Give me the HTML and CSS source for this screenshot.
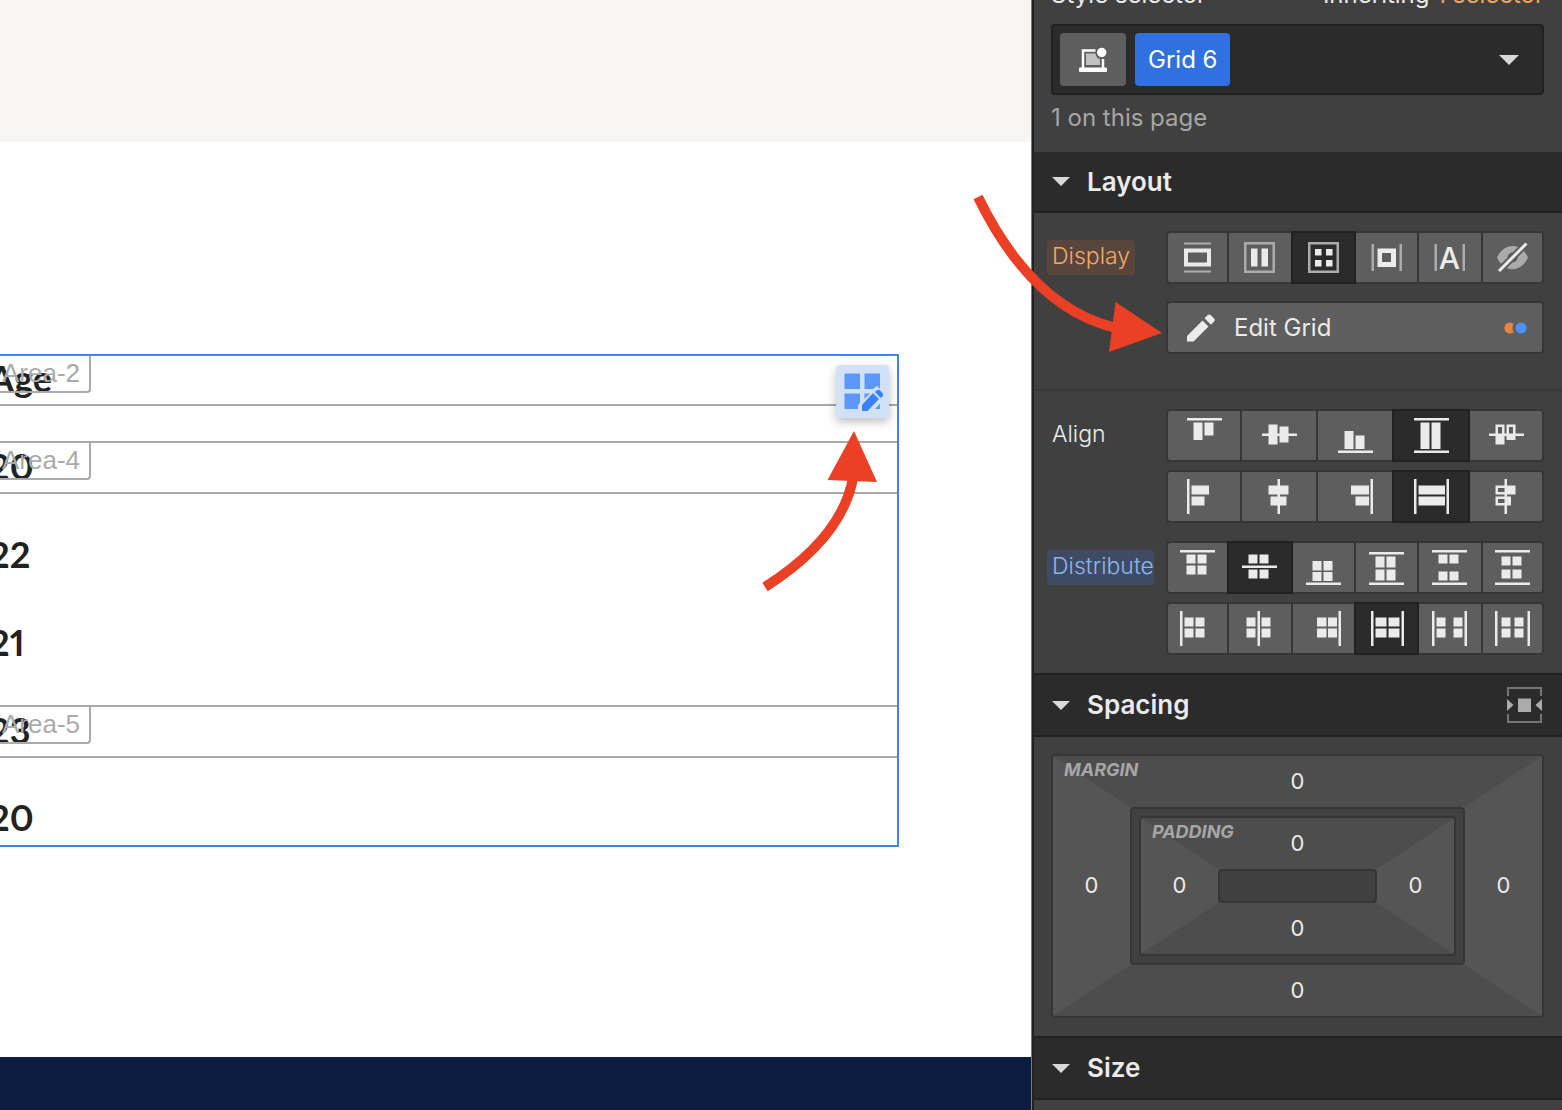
FILE: index.html
```html
<!DOCTYPE html>
<html lang="en">
<head>
  <meta charset="UTF-8" />
  <meta name="viewport" content="width=device-width, initial-scale=1" />
  <title>Designer - Grid 6</title>
  <link rel="stylesheet" href="styles.css">
</head>
<body>
  <!-- Icon sprite -->
  <svg class="sprite" aria-hidden="true">
    <!-- Align -->
    <symbol id="align-start" viewBox="0 0 35 35">
      <path d="M0 0h35v2.5H0zM6.5 4.5h9V22h-9zM17.5 4.5h9v13h-9z"/>
    </symbol>
    <symbol id="align-center" viewBox="0 0 35 35">
      <path d="M0 15.5h35V18H0zM6.5 6.5h9v20h-9zM17.5 8.5h9v16h-9z"/>
    </symbol>
    <symbol id="align-end" viewBox="0 0 35 35">
      <path d="M0 32.5h35V35H0zM6.5 13h9v18h-9zM17.5 17.5h9V31h-9z"/>
    </symbol>
    <symbol id="align-stretch" viewBox="0 0 35 35">
      <path d="M0 0h35v2.5H0zM0 32.5h35V35H0zM6.5 4.5h9V31h-9zM17.5 4.5h9V31h-9z"/>
    </symbol>
    <symbol id="align-baseline" viewBox="0 0 35 35">
      <path fill-rule="evenodd" d="M0 15.5h6.5v-9h9v9h2v-9h9v9H35V18h-8.5v4h-9v-4h-2v8.5h-9V18H0zM9 9v6.5h4V9zM20 9v6.5h4V9z"/>
    </symbol>
    <!-- Distribute -->
    <symbol id="dist-start" viewBox="0 0 35 35">
      <path d="M0 0h35v2.5H0zM6.5 4.5h9v9h-9zM17.5 4.5h9v9h-9zM6.5 15.5h9v9h-9zM17.5 15.5h9v9h-9z"/>
    </symbol>
    <symbol id="dist-center" viewBox="0 0 35 35">
      <path d="M0 15.5h35V18H0zM6.5 4.5h9v9h-9zM17.5 4.5h9v9h-9zM6.5 19.5h9v9h-9zM17.5 19.5h9v9h-9z"/>
    </symbol>
    <symbol id="dist-end" viewBox="0 0 35 35">
      <path d="M0 32.5h35V35H0zM6.5 11h9v9.500h-9zM17.5 11h9v9.5h-9zM6.5 22h9v9h-9zM17.5 22h9v9h-9z"/>
    </symbol>
    <symbol id="dist-stretch" viewBox="0 0 35 35">
      <path d="M0 2h35v2.5H0zM0 32.5h35V35H0zM6.5 6.5h9v11h-9zM17.5 6.5h9v11h-9zM6.5 19.5h9v11h-9zM17.5 19.5h9v11h-9z"/>
    </symbol>
    <symbol id="dist-between" viewBox="0 0 35 35">
      <path d="M0 0h35v2.5H0zM0 32.5h35V35H0zM6.5 4.5h9v9h-9zM17.5 4.5h9v9h-9zM6.5 21.5h9v9h-9zM17.5 21.5h9v9h-9z"/>
    </symbol>
    <symbol id="dist-around" viewBox="0 0 35 35">
      <path d="M0 0h35v2.5H0zM0 32.5h35V35H0zM6.5 6.5h9v9h-9zM17.5 6.5h9v9h-9zM6.5 19.5h9v9h-9zM17.5 19.5h9v9h-9z"/>
    </symbol>
  </svg>

  <!-- Page canvas -->
  <main class="canvas">
    <div class="hero-band"></div>
    <section class="page-body">
      <div class="site-grid">
        <div class="cell area">Age<span class="area-tag">Area-2</span></div>
        <div class="cell area">20<span class="area-tag">Area-4</span></div>
        <div class="cell">22</div>
        <div class="cell">21</div>
        <div class="cell area">23<span class="area-tag">Area-5</span></div>
        <div class="cell">20</div>
        <button class="grid-edit" aria-label="Edit grid">
          <svg width="53" height="53" viewBox="0 0 53 53">
            <path fill="#5c98fa" d="M8.5 8.5H24V24H8.5zM28.5 8.5H44V24H28.5zM8.500 28.500H24V38l-2 2v4H8.500zM28.500 28.500h5.500L28.500 34zM44 38.500V44h-5z"/>
            <path d="M35 25.500l6-4.500 9.500 9-7 7z" fill="#d2e1f8"/>
            <path fill="#3b82f6" d="M26 40l11-12 6 6-11.500 12H26zM39 27l1.500-1.500q2-1.500 4 .5l2 2q1.500 2 0 3.500L44.500 33z"/>
          </svg>
        </button>
      </div>
    </section>
    <footer class="site-footer"></footer>
  </main>

  <!-- Style panel -->
  <aside class="panel">
    <section class="selector">
      <div class="selector-top">
        <span>Style selector</span>
        <span>Inheriting <a href="#" class="inherit-link">1 selector</a></span>
      </div>
      <div class="selector-box">
        <button class="state-btn" aria-label="Breakpoint">
          <svg width="28" height="26" viewBox="0 0 28 26">
            <path d="M4 21V3.500h12.500M24 12v9" fill="none" stroke="#fff" stroke-width="2.500"/>
            <path d="M7 6.500h9.500q1 5 4.500 5.500V18H7z" fill="#c2c2c2"/>
            <rect y="20.500" width="28" height="4.500" rx="1" fill="#fff"/>
            <circle cx="22.700" cy="5.500" r="4.700" fill="#fff"/>
          </svg>
        </button>
        <button class="class-tag">Grid 6</button>
        <button class="selector-caret" aria-label="Show classes"><span class="caret caret-big"></span></button>
      </div>
      <div class="selector-count">1 on this page</div>
    </section>

    <header class="panel-header panel-header-first">
      <span class="caret"></span>
      <h2>Layout</h2>
    </header>

    <section class="group">
      <div class="row">
        <div class="label-col"><span class="label label-orange">Display</span></div>
        <div class="stack stack-wide">
          <div class="btn-group">
            <button aria-label="Block">
              <svg class="icon" viewBox="0 0 35 35">
                <path class="dim" d="M4 2.500h27v2H4zM4 30.500h27v2H4z"/>
                <path fill-rule="evenodd" d="M4 8.500h27v18H4zM8 12.500v10h19v-10z"/>
              </svg>
            </button>
            <button aria-label="Flex">
              <svg class="icon" viewBox="0 0 35 35">
                <path class="dim" fill-rule="evenodd" d="M2 2h31v31H2zM4.500 4.500v26h26v-26z"/>
                <path d="M9 8.500h6.500v18H9zM19.500 8.500H26v18h-6.500z"/>
              </svg>
            </button>
            <button class="active" aria-label="Grid">
              <svg class="icon" viewBox="0 0 35 35">
                <path class="dim" fill-rule="evenodd" d="M2 2h31v31H2zM4.500 4.500v26h26v-26z"/>
                <path d="M9 9h6.500v6.500H9zM20 9h6.500v6.500H20zM9 20h6.500v6.500H9zM20 20h6.500v6.500H20z"/>
              </svg>
            </button>
            <button aria-label="Inline block">
              <svg class="icon" viewBox="0 0 35 35">
                <path class="dim" d="M2.500 4H5v27H2.500zM30.500 4H33v27h-2.500z"/>
                <path fill-rule="evenodd" d="M8.500 8.500h18.500v18.500H8.500zM13 13v9h9v-9z"/>
              </svg>
            </button>
            <button aria-label="Inline">
              <svg class="icon" viewBox="0 0 35 35">
                <path class="dim" d="M2.500 4H5v27H2.500zM30.500 4H33v27h-2.500z"/>
                <text class="icon-letter" x="17.500" y="28.500" text-anchor="middle">A</text>
              </svg>
            </button>
            <button aria-label="None">
              <svg class="icon" viewBox="0 0 35 35">
                <path class="dim" fill-rule="evenodd" d="M2 17.500C9 2 26 2 33 17.500C26 33 9 33 2 17.500zM17.500 12.500a5 5 0 1 0 0 10a5 5 0 1 0 0-10z"/>
                <path d="M2 33L33 2" stroke="#5e5e5e" stroke-width="7"/>
                <path d="M4 31L31.500 3.500" stroke="#ebebeb" stroke-width="3"/>
              </svg>
            </button>
          </div>
          <button class="edit-grid">
            <svg width="28" height="28" viewBox="0 0 28 28">
              <path d="M0 22L15.500 6.500l6 6L6.500 27.500H0zM17.500 4.300l3-3q1.700-1.600 3.400 0l3 3q1.700 1.700 0 3.400l-3 3z"/>
            </svg>
            <span>Edit Grid</span>
            <svg class="edit-dots" width="23" height="12" viewBox="0 0 23 12">
              <circle cx="6" cy="6" r="5.600" fill="#e9843f"/>
              <circle cx="17" cy="6" r="8.500" fill="#5e5e5e"/>
              <circle cx="17" cy="6" r="5.600" fill="#4a90f7"/>
            </svg>
          </button>
        </div>
      </div>
    </section>

    <section class="group group-divided">
      <div class="row">
        <div class="label-col"><span class="label">Align</span></div>
        <div class="stack">
          <div class="btn-group">
            <button aria-label="Align items start"><svg class="icon"><use href="#align-start"/></svg></button>
            <button aria-label="Align items center"><svg class="icon"><use href="#align-center"/></svg></button>
            <button aria-label="Align items end"><svg class="icon"><use href="#align-end"/></svg></button>
            <button class="active" aria-label="Align items stretch"><svg class="icon"><use href="#align-stretch"/></svg></button>
            <button aria-label="Align items baseline"><svg class="icon"><use href="#align-baseline"/></svg></button>
          </div>
          <div class="btn-group">
            <button aria-label="Justify items start"><svg class="icon turned"><use href="#align-start"/></svg></button>
            <button aria-label="Justify items center"><svg class="icon turned"><use href="#align-center"/></svg></button>
            <button aria-label="Justify items end"><svg class="icon turned"><use href="#align-end"/></svg></button>
            <button class="active" aria-label="Justify items stretch"><svg class="icon turned"><use href="#align-stretch"/></svg></button>
            <button aria-label="Justify items baseline"><svg class="icon turned"><use href="#align-baseline"/></svg></button>
          </div>
        </div>
      </div>

      <div class="row">
        <div class="label-col"><span class="label label-blue">Distribute</span></div>
        <div class="stack">
          <div class="btn-group">
            <button aria-label="Align content start"><svg class="icon"><use href="#dist-start"/></svg></button>
            <button class="active" aria-label="Align content center"><svg class="icon"><use href="#dist-center"/></svg></button>
            <button aria-label="Align content end"><svg class="icon"><use href="#dist-end"/></svg></button>
            <button aria-label="Align content stretch"><svg class="icon"><use href="#dist-stretch"/></svg></button>
            <button aria-label="Align content space between"><svg class="icon"><use href="#dist-between"/></svg></button>
            <button aria-label="Align content space around"><svg class="icon"><use href="#dist-around"/></svg></button>
          </div>
          <div class="btn-group">
            <button aria-label="Justify content start"><svg class="icon turned"><use href="#dist-start"/></svg></button>
            <button aria-label="Justify content center"><svg class="icon turned"><use href="#dist-center"/></svg></button>
            <button aria-label="Justify content end"><svg class="icon turned"><use href="#dist-end"/></svg></button>
            <button class="active" aria-label="Justify content stretch"><svg class="icon turned"><use href="#dist-stretch"/></svg></button>
            <button aria-label="Justify content space between"><svg class="icon turned"><use href="#dist-between"/></svg></button>
            <button aria-label="Justify content space around"><svg class="icon turned"><use href="#dist-around"/></svg></button>
          </div>
        </div>
      </div>
    </section>

    <header class="panel-header">
      <span class="caret"></span>
      <h2>Spacing</h2>
      <button class="center-btn" aria-label="Center element">
        <svg width="35" height="36" viewBox="0 0 35 36">
          <path d="M1 9V1h33v8M1 27v8h33v-8" fill="none" stroke="#757575" stroke-width="2"/>
          <path d="M0 12l6.500 6L0 24zM35 12l-6.500 6 6.500 6zM11 11.500h13V25H11z" fill="#ababab"/>
        </svg>
      </button>
    </header>

    <section class="spacing">
      <div class="box margin-box">
        <span class="box-name">Margin</span>
        <button class="side side-top">0</button>
        <button class="side">0</button>
        <div class="padding-wrap">
          <div class="box">
            <span class="box-name">Padding</span>
            <button class="side side-top">0</button>
            <button class="side">0</button>
            <div class="box-core"></div>
            <button class="side">0</button>
            <button class="side side-bottom">0</button>
          </div>
        </div>
        <button class="side">0</button>
        <button class="side side-bottom">0</button>
      </div>
    </section>

    <header class="panel-header">
      <span class="caret"></span>
      <h2>Size</h2>
    </header>
  </aside>

  <!-- Callout arrows -->
  <svg class="arrows" width="1170" height="600" viewBox="0 0 1170 600" aria-hidden="true">
    <path class="arrow-line" d="M978 197Q1032 308 1116 328"/>
    <path class="arrow-head" d="M1115.500 302L1162 333L1109 352z"/>
    <path class="arrow-line" d="M765 587Q842 538 853 478"/>
    <path class="arrow-head" d="M854 431L827.500 480L877 482z"/>
  </svg>
</body>
</html>
```
FILE: styles.css
```css
* {
  box-sizing: border-box;
}

body {
  margin: 0;
  display: flex;
  min-height: 100vh;
  position: relative;
  overflow: hidden;
  font-family: Inter, "Liberation Sans", sans-serif;
  font-size: 24px;
  line-height: 30px;
  background-color: #fff;
}

button {
  margin: 0;
  padding: 0;
  border: none;
  background: none;
  font: inherit;
  color: inherit;
  cursor: pointer;
}

svg {
  display: block;
}

.sprite {
  position: absolute;
  width: 0;
  height: 0;
}

/********************************************************
 * Page canvas
 ********************************************************/
.canvas {
  flex: 1;
  min-width: 0;
  display: flex;
  flex-direction: column;
  overflow: hidden;
  border-right: 1px solid #7a7a7a;
}

.hero-band {
  height: 142px;
  background-color: #f7f6f4;
}

.page-body {
  flex: 1;
  padding: 212px 132px 48px 0;
}

.site-footer {
  height: 53px;
  background-color: #0a1c40;
}

.site-grid {
  position: relative;
  display: grid;
  grid-template-rows: 50px repeat(4, 53px) 52px;
  row-gap: 35px;
  margin-left: -13px; /* column starts left of the visible area */
  border: 2px solid #3f83f3;
}

.cell {
  position: relative;
  display: flex;
  align-items: flex-end;
  padding-bottom: 1px;
  border: solid transparent;
  border-width: 2px 0;
  font-family: Lato, sans-serif;
  font-size: 36px;
  font-weight: 700;
  font-variant-numeric: proportional-nums;
  line-height: 49px;
  color: #222;
}
.cell.area {
  border-color: #aaa;
}
.cell:first-child {
  border-top: 0;
}

.area-tag {
  position: absolute;
  top: 0;
  left: 0;
  height: 37px;
  padding: 0 9px 0 13px;
  border: solid #aaa;
  border-width: 0 2px 2px 0;
  border-radius: 0 0 4px 0;
  font-family: "Liberation Sans", sans-serif;
  font-size: 26px;
  font-weight: 400;
  line-height: 34px;
  color: #aaa;
}

.grid-edit {
  position: absolute;
  top: 9px;
  right: 8px;
  width: 53px;
  height: 53px;
  border-radius: 4px;
  background-color: #d2e1f8;
  box-shadow: 0 4px 10px rgba(0, 0, 0, 0.25);
}

/********************************************************
 * Style panel
 ********************************************************/
.panel {
  flex: 0 0 530px;
  overflow: hidden;
  border-left: 2px solid #222;
  background-color: #404040;
  color: #ebebeb;
}

.selector {
  margin-top: -20px; /* panel is scrolled */
  padding: 0 18px 19px 17px;
}

.selector-top {
  display: flex;
  justify-content: space-between;
  margin-bottom: 14px;
}

.inherit-link {
  color: #f2a45f;
  text-decoration: none;
}

.selector-box {
  display: flex;
  gap: 9px;
  height: 71px;
  padding: 7px;
  border: 2px solid #212121;
  border-radius: 4px;
  background-color: #2b2b2b;
}

.state-btn {
  width: 66px;
  display: flex;
  justify-content: center;
  align-items: center;
  border-radius: 4px;
  background-color: #5e5e5e;
}

.class-tag {
  padding: 0 13px;
  border-radius: 4px;
  background-color: #3171df;
  color: #fff;
}

.selector-caret {
  margin-left: auto;
  padding-right: 16px;
}

.selector-count {
  margin-top: 8px;
  color: #a6a6a6;
}

.caret {
  display: block;
  border: solid transparent;
  border-width: 9px 9px 0;
  border-top-color: #d9d9d9;
}
.caret-big {
  border-width: 10px 10px 0;
}

.panel-header {
  display: flex;
  align-items: center;
  gap: 17px;
  height: 64px;
  padding: 0 20px 0 18px;
  border: solid #212121;
  border-width: 2px 0;
  background-color: #2b2b2b;
}
.panel-header h2 {
  margin: 0;
  font-size: 26px;
  font-weight: 600;
}
.panel-header-first {
  height: 61px;
  border-top: 0;
}

.center-btn {
  margin-left: auto;
}

/********************************************************
 * Layout controls
 ********************************************************/
.group {
  display: flex;
  flex-direction: column;
  gap: 18px;
  padding: 18px 18px 35px 17px;
}
.group-divided {
  padding-bottom: 18px;
  border-top: 2px solid #383838;
}

.row {
  display: flex;
}

.label-col {
  flex: 0 0 115px;
  padding-top: 9px;
  white-space: nowrap;
}

.label {
  display: inline-block;
  margin-left: -4px;
  padding: 0 5px 2px;
  border-radius: 4px;
  font-size: 23px;
  font-weight: 300;
  line-height: 33px;
}
.label-orange {
  background-color: #58463c;
  color: #f2a868;
}
.label-blue {
  padding-right: 0;
  background-color: #3f4b62;
  color: #8ab5f5;
}

.stack {
  flex: 1;
  display: flex;
  flex-direction: column;
  gap: 8px;
}
.stack-wide {
  gap: 17px;
}

.btn-group {
  display: flex;
}
.btn-group button {
  flex: 1 1 6px;
  height: 53px;
  display: flex;
  justify-content: center;
  align-items: center;
  border: 2px solid #363636;
  background-color: #5e5e5e;
}
.btn-group button + button {
  margin-left: -2px;
}
/* end buttons overlap one neighbour only */
.btn-group button:first-child {
  flex-basis: 4px;
  border-radius: 4px 0 0 4px;
}
.btn-group button:last-child {
  flex-basis: 4px;
  border-radius: 0 4px 4px 0;
}
.btn-group .active {
  position: relative;
  border-color: #212121;
  background-color: #2b2b2b;
}

.icon {
  width: 35px;
  height: 35px;
  flex-shrink: 0;
  fill: #ebebeb;
}
.icon .dim {
  fill: #ababab;
}
.icon-letter {
  font-size: 30px;
  font-weight: 500;
}
/* swaps the x and y axes */
.turned {
  transform: rotate(90deg) scaleY(-1);
}

.edit-grid {
  display: flex;
  align-items: center;
  gap: 19px;
  height: 53px;
  padding: 0 15px 0 19px;
  border: 2px solid #363636;
  border-radius: 4px;
  background-color: #5e5e5e;
  fill: #ebebeb;
}
.edit-dots {
  margin-left: auto;
}

/********************************************************
 * Spacing box
 ********************************************************/
.spacing {
  padding: 17px 18px 18px 17px;
}

.box {
  position: relative;
  display: grid;
  grid-template-columns: 77px 1fr 77px;
  grid-template-rows: 51px 1fr 51px;
  border: 2px solid #363636;
  border-radius: 4px;
  background-color: #555;
  font-size: 22px;
}

.box-name {
  position: absolute;
  top: 2px;
  left: 11px;
  z-index: 1;
  font-size: 18px;
  line-height: 24px;
  font-weight: 700;
  font-style: italic;
  text-transform: uppercase;
  color: #a6a6a6;
}

.side {
  padding-bottom: 2px;
}
.side-top,
.side-bottom {
  grid-column: 1 / -1;
  background-color: #4d4d4d;
}
.side-top {
  clip-path: polygon(0 0, 100% 0, calc(100% - 77px) 100%, 77px 100%);
}
.side-bottom {
  clip-path: polygon(77px 0, calc(100% - 77px) 0, 100% 100%, 0 100%);
}

.padding-wrap {
  padding: 7px;
  border: 2px solid #363636;
  border-radius: 4px;
  background-color: #404040;
}

.box-core {
  height: 34px;
  border: 2px solid #363636;
  border-radius: 4px;
  background-color: #404040;
}

/********************************************************
 * Callout arrows
 ********************************************************/
.arrows {
  position: absolute;
  top: 0;
  left: 0;
  pointer-events: none;
}
.arrow-line {
  fill: none;
  stroke: #ea4025;
  stroke-width: 10;
}
.arrow-head {
  fill: #ea4025;
}
```
